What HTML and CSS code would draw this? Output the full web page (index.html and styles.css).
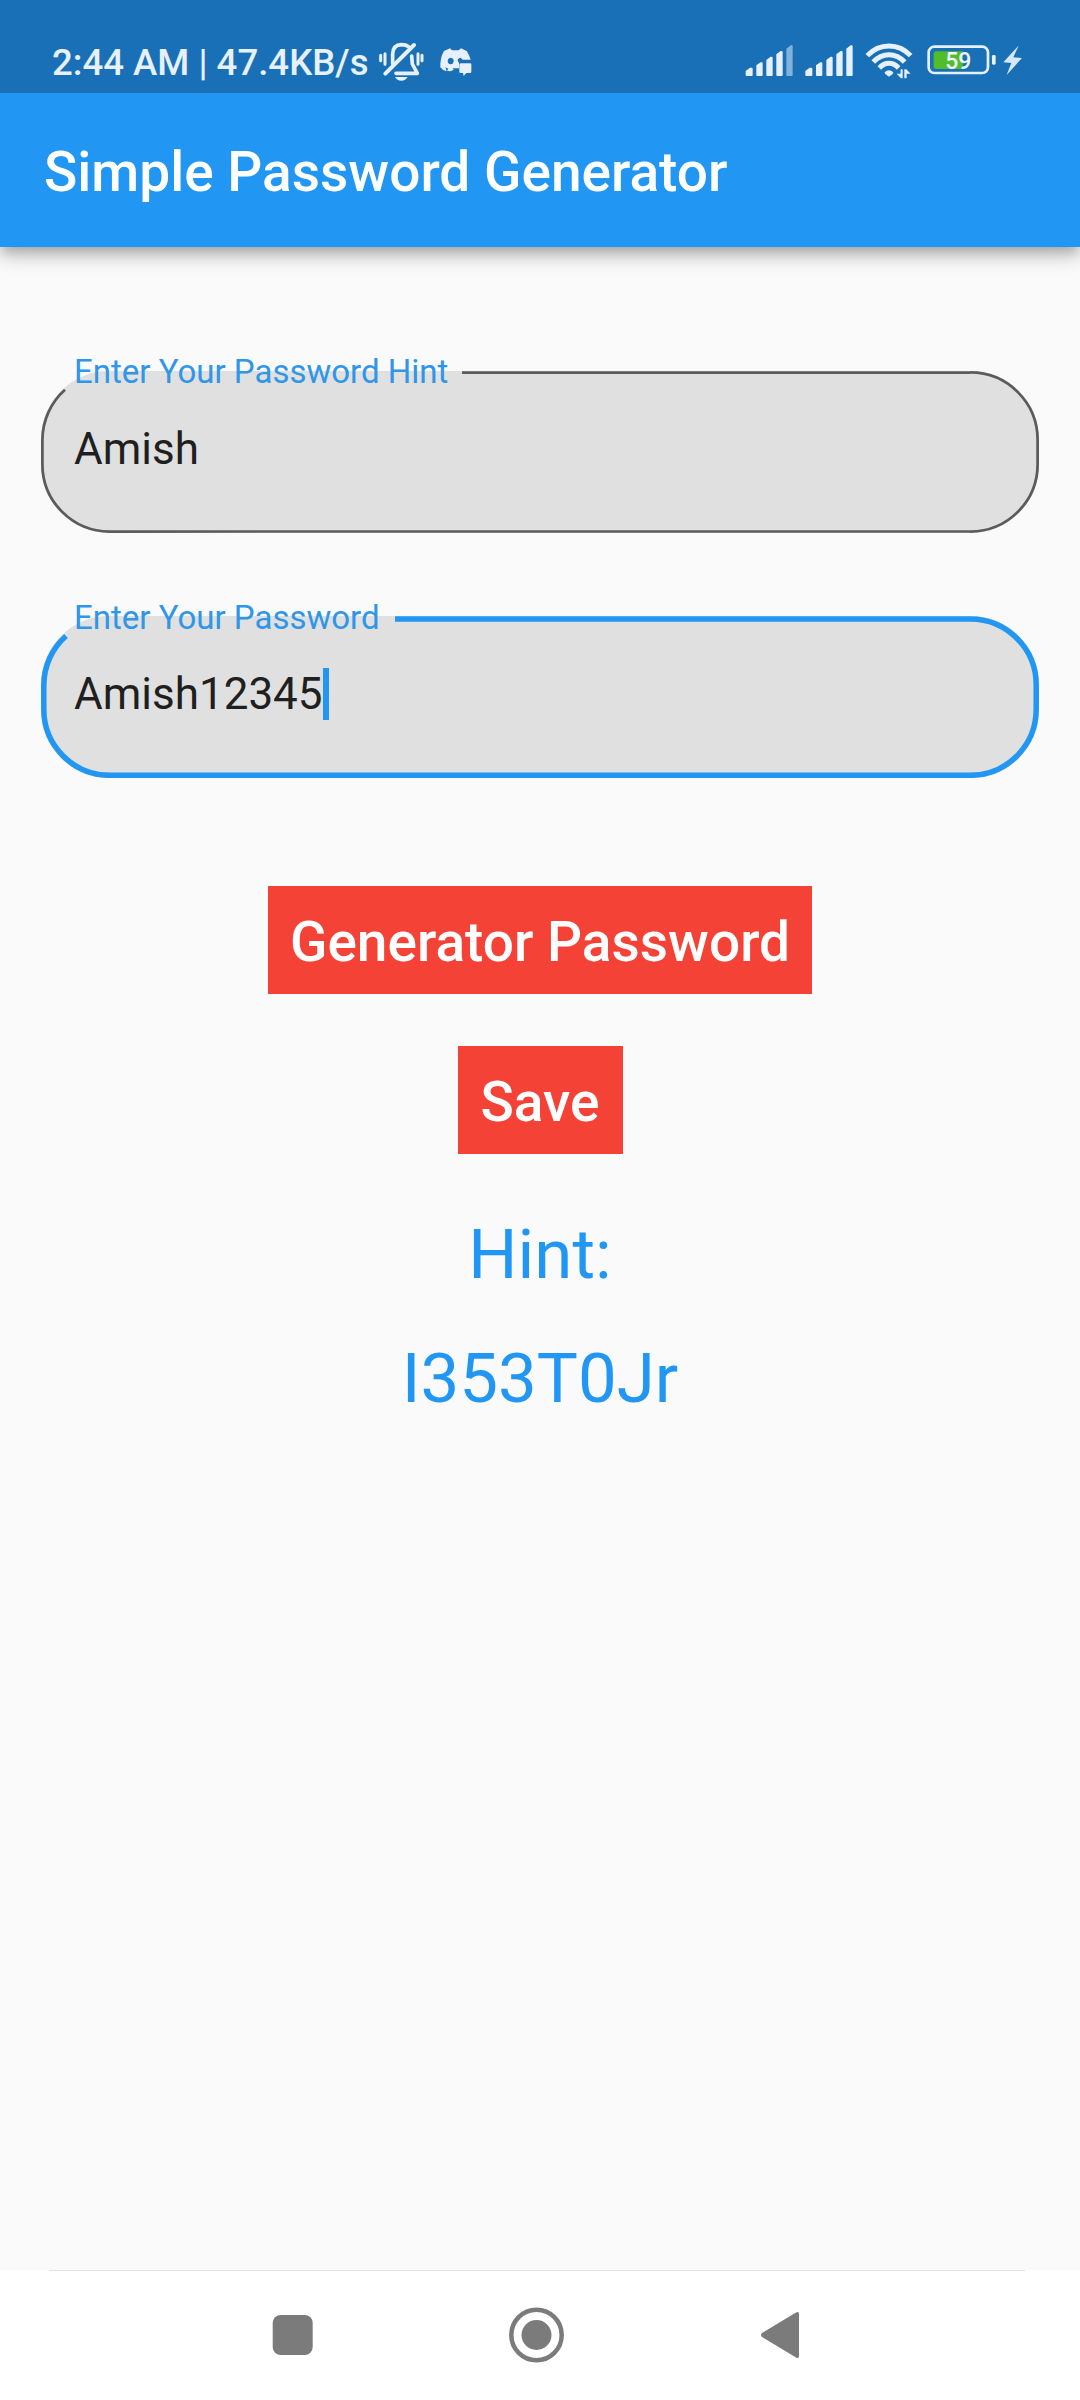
FILE: index.html
```html
<!DOCTYPE html>
<html lang="en">
<head>
<meta charset="utf-8">
<title>Simple Password Generator</title>
<link rel="stylesheet" href="styles.css">
</head>
<body>
<div class="status-bar">
  <span class="clock">2:44 AM | 47.4KB/s</span>
  <svg class="bell" viewBox="0 0 141 120">
    <g fill="none" stroke="#e6f1fb" stroke-width="11" stroke-linecap="round" stroke-linejoin="round">
      <path stroke-width="9" d="M8 43V59M21 38V70M120 38V70M132 43V59"/>
      <path d="M44 68V39Q45 12 70 11Q84 11 92 17"/>
      <path stroke-width="12" d="M22 98 108 12"/>
      <path d="M101 45 103 69 118 97H54"/>
    </g>
    <path fill="#e6f1fb" d="M51 108H89Q83 119 70 119Q57 119 51 108Z"/>
  </svg>
  <svg class="discord" viewBox="0 0 96 84">
    <path fill="#e6f1fb" fill-rule="evenodd" d="M12 9 30 1 36 7H56L63 1 80 9Q88 21 92 35H68L62 29Q53 30 53 38L57 44V61H38L41 66 30 70 21 68 25 62 16 58 20 70Q8 68 1 58Q0 29 12 9ZM32 29a9 10 0 1 0 .1 0Z"/>
    <path fill="#e6f1fb" d="M64 46H90Q94 46 94 50V71Q94 75 90 75H79L71 84 69 75H62Q58 75 58 71V50Q58 46 64 46Z"/>
  </svg>
  <svg class="signals" viewBox="0 0 835 105">
    <g fill="#e6f1fb">
      <path d="M2 96V84L15 74H20Q23 74 23 77V96Q23 99 20 99H5Q2 99 2 96ZM34 96V67L47 58H50Q53 58 53 61V96Q53 99 50 99H37Q34 99 34 96ZM64 96V51L77 41H80Q83 41 83 44V96Q83 99 80 99H67Q64 99 64 96ZM94 96V34L107 24H110Q113 24 113 27V96Q113 99 110 99H97Q94 99 94 96Z"/>
      <path opacity=".5" d="M124 96V17L137 7H140Q143 7 143 10V96Q143 99 140 99H127Q124 99 124 96Z"/>
      <path d="M181 96V84L194 74H199Q202 74 202 77V96Q202 99 199 99H184Q181 99 181 96ZM213 96V67L226 58H229Q232 58 232 61V96Q232 99 229 99H216Q213 99 213 96ZM244 96V51L257 41H260Q263 41 263 44V96Q263 99 260 99H247Q244 99 244 96ZM274 96V34L287 24H290Q293 24 293 27V96Q293 99 290 99H277Q274 99 274 96ZM304 96V17L317 7H320Q323 7 323 10V96Q323 99 320 99H307Q304 99 304 96Z"/>
      <path d="M419 88Q432 76 445 88Q446 92 434 100Q432 102 430 100Q418 92 419 88Z"/>
      <path d="M467 79H473V106H468L455 92H467ZM478 106V79H484L497 92H485V106Z"/>
      <rect x="741" y="36" width="11" height="29" rx="4"/>
      <path opacity=".92" d="M821 8 775 58 799 60 785 96 831 45 805 43Z"/>
    </g>
    <g fill="none" stroke="#e6f1fb" stroke-width="15">
      <path d="M367 38Q394 9 432 9Q470 9 497 38"/>
      <path d="M385 57Q405 35 432 35Q459 35 479 57"/>
      <path d="M403 75Q416 61 432 61Q448 61 461 75"/>
      <rect x="551" y="11" width="178" height="79" rx="17" stroke-width="8"/>
    </g>
    <path fill="#51bd28" d="M574 25H653V78H574Q566 78 566 70V33Q566 25 574 25Z"/>
    <text class="battery-level" x="640" y="78" text-anchor="middle">59</text>
  </svg>
</div>
<header class="app-bar"><h1>Simple Password Generator</h1></header>
<main>
  <div class="field">
    <svg class="outline" viewBox="0 0 998 162">
      <rect width="998" height="162" rx="68" fill="#e0e0e0"/>
      <path fill="none" stroke="#5b5b5b" stroke-width="2.75" d="M421 1.5H929A67.3 67.3 0 0 1 996.6 68.8V93.2A67.3 67.3 0 0 1 929 160.5H69A67.3 67.3 0 0 1 1.4 93.2V68.8A67.3 67.3 0 0 1 24 18.8"/>
    </svg>
    <label>Enter Your Password Hint</label>
    <span class="value">Amish</span>
  </div>
  <div class="field focused">
    <svg class="outline" viewBox="0 0 998 162">
      <rect width="998" height="162" rx="68" fill="#e0e0e0"/>
      <path fill="none" stroke="#2196f3" stroke-width="5.5" d="M354 3H929A66 66 0 0 1 995.2 69V93A66 66 0 0 1 929 159.3H69A66 66 0 0 1 2.8 93V69A66 66 0 0 1 25 20"/>
    </svg>
    <label>Enter Your Password</label>
    <span class="value">Amish12345</span><i class="caret"></i>
  </div>
  <button class="generate">Generator Password</button>
  <button class="save">Save</button>
  <p class="hint">Hint:</p>
  <p class="result">I353T0Jr</p>
</main>
<nav class="nav-bar">
  <svg viewBox="0 0 540 60" fill="#7b7b7b">
    <rect x="2.700" y="10" width="40" height="40" rx="8"/>
    <circle cx="266.5" cy="30" r="25.2" fill="none" stroke="#7b7b7b" stroke-width="4.500"/>
    <circle cx="266.5" cy="30" r="15"/>
    <path d="M492 28 526 7.500Q529 6 529 9V51Q529 54 526 52.500L492 32Q490 30 492 28Z"/>
  </svg>
</nav>
</body>
</html>
```
FILE: styles.css
```css
* { box-sizing: border-box; }
body {
  margin: 0;
  width: 1080px;
  height: 2400px;
  display: flex;
  flex-direction: column;
  overflow: hidden;
  background: #fafafa;
  font-family: Roboto, sans-serif;
}
svg { display: block; flex: none; }
.status-bar {
  position: relative;
  z-index: 1;
  height: 93px;
  padding: 32px 57px 0 52px;
  display: flex;
  align-items: flex-start;
  background: #1a70b7;
  color: #e6f1fb;
}
.clock {
  width: 326px;
  padding-top: 1px;
  font-size: 36.6px;
  font-weight: 500;
  line-height: 60px;
  white-space: nowrap;
}
.bell { width: 47px; height: 40px; margin: 9px 15px 0 0; }
.discord { width: 32px; height: 28px; margin-top: 16px; }
.signals { width: 278.3px; height: 35px; margin: 11px 0 0 auto; overflow: visible; }
.battery-level { font-size: 69px; font-weight: 500; fill: #eef6fd; }
.app-bar {
  height: 154px;
  padding: 4px 44px 0;
  display: flex;
  align-items: center;
  background: #2196f3;
  color: #fff;
  box-shadow: 0 5px 11px -3px rgba(0,0,0,.2), 0 11px 14px rgba(0,0,0,.14), 0 3px 27px rgba(0,0,0,.12);
}
h1 { margin: 0; font-size: 55px; font-weight: 500; white-space: nowrap; }
main {
  flex: 1;
  padding: 124px 41px 0;
  display: flex;
  flex-direction: column;
  align-items: center;
}
.field {
  position: relative;
  width: 998px;
  height: 162px;
  margin-bottom: 82.5px;
  padding: 48px 33px 0;
  display: flex;
  align-items: flex-start;
}
.field.focused { margin-bottom: 108.5px; }
.outline { position: absolute; inset: 0; width: 998px; height: 162px; }
.field label {
  position: absolute;
  left: 33px;
  top: -19px;
  font-size: 33px;
  line-height: 40px;
  color: #2f96e8;
  white-space: nowrap;
}
.focused label { top: -18px; }
.value {
  position: relative;
  font-size: 44px;
  line-height: 60px;
  color: #1f1f1f;
}
.caret { position: relative; width: 6px; height: 52px; margin-top: 4px; background: #2196f3; }
button {
  height: 108px;
  padding: 4px 0 0;
  border: 0;
  background: #f44336;
  color: #fff;
  font: 500 55px Roboto, sans-serif;
}
.generate { width: 544px; margin-bottom: 52px; }
.save { width: 165px; margin-bottom: 60px; }
p { margin: 0; font-size: 69px; line-height: 82px; color: #2196f3; }
.hint { margin-bottom: 42px; }
.nav-bar {
  height: 130px;
  padding: 35px 270px 0;
  background: linear-gradient(#e4e4e4, #e4e4e4) 49px 0 / 976px 1px no-repeat #fff;
}
.nav-bar svg { width: 540px; height: 60px; }
```
